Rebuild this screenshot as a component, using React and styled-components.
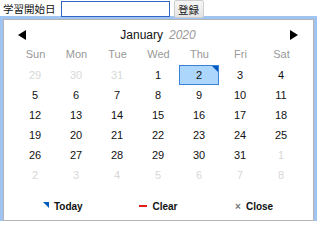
import React from "react";
import styled, { createGlobalStyle } from "styled-components";

const GlobalStyle = createGlobalStyle`
  html, body {
    margin: 0;
    padding: 0;
    background: #fff;
  }
  body {
    font-family: "Liberation Sans", Arial, "Noto Sans CJK JP", sans-serif;
    color: #111;
  }
`;

const Page = styled.div`
  padding: 0 0 0 3px;
  width: 311px;
`;

const TopRow = styled.div`
  display: flex;
  align-items: center;
  height: 18px;
`;

const Label = styled.span`
  font-family: "Noto Sans CJK JP", sans-serif;
  font-size: 10.5px;
  line-height: 16px;
  color: #111;
`;

const TextInput = styled.input`
  box-sizing: border-box;
  width: 109px;
  height: 16px;
  margin: 0 0 0 5px;
  padding: 0 2px;
  border: 1px solid #3464c6;
  outline: none;
  font-size: 11px;
`;

const Button = styled.button`
  box-sizing: border-box;
  height: 18px;
  width: 30px;
  margin-left: 4px;
  padding: 0;
  border: 1px solid #cfcfcf;
  border-radius: 2px;
  background: linear-gradient(#f6f6f6, #e4e4e4);
  font-family: "Noto Sans CJK JP", sans-serif;
  font-size: 10.5px;
  color: #222;
`;

const Picker = styled.div`
  box-sizing: border-box;
  margin-top: 1px;
  width: 311px;
  border: 1px solid #b4b4b4;
  box-shadow: 0 0 0 3px #9fc4f2;
  background: #fff;
  padding: 7px 10px 6px 10px;
`;

const Header = styled.div`
  display: flex;
  align-items: center;
  justify-content: space-between;
  height: 16px;
  padding: 0 5px 0 4px;
`;

const Arrow = styled.span`
  width: 0;
  height: 0;
  border-top: 5px solid transparent;
  border-bottom: 5px solid transparent;
  ${(p) =>
    p.$dir === "left"
      ? "border-right: 8px solid #000;"
      : "border-left: 8px solid #000;"}
`;

const Title = styled.div`
  font-size: 12px;
  color: #111;
  display: flex;
  gap: 6px;
`;

const Year = styled.span`
  font-style: italic;
  color: #999;
`;

const Grid = styled.div`
  display: grid;
  grid-template-columns: repeat(7, 41px);
  padding-left: 1px;
`;

const WeekDay = styled.div`
  margin-top: 3px;
  margin-bottom: 3px;
  height: 16px;
  line-height: 16px;
  text-align: center;
  font-size: 11px;
  color: #999;
`;

const Day = styled.div`
  position: relative;
  box-sizing: border-box;
  height: 20px;
  line-height: 18px;
  text-align: center;
  font-size: 11px;
  border: 1px solid ${(p) => (p.$selected ? "#3b82d6" : "transparent")};
  background: ${(p) => (p.$selected ? "#acd6fc" : "transparent")};
  color: ${(p) => (p.$muted ? "#d8d8d8" : "#111")};
  width: 40px;
`;

const Corner = styled.span`
  position: absolute;
  top: 0;
  right: 0;
  width: 0;
  height: 0;
  border-top: 6px solid #0059bc;
  border-left: 6px solid transparent;
`;

const Footer = styled.div`
  display: grid;
  grid-template-columns: repeat(3, 1fr);
  width: 287px;
  margin: 13px 0 0 1px;
  height: 16px;
`;

const FooterButton = styled.div`
  display: flex;
  align-items: center;
  justify-content: center;
  gap: 5px;
  font-size: 10px;
  font-weight: bold;
  color: #111;
`;

const TodayMark = styled.span`
  width: 0;
  height: 0;
  border-top: 6px solid #0059bc;
  border-left: 6px solid transparent;
  margin-top: -3px;
`;

const ClearMark = styled.span`
  width: 8px;
  height: 2px;
  background: #e0201a;
`;

const CloseMark = styled.span`
  font-size: 10px;
  color: #777;
  font-weight: bold;
`;

const weekdays = ["Sun", "Mon", "Tue", "Wed", "Thu", "Fri", "Sat"];

const days = [
  ...[29, 30, 31].map((d) => ({ d, muted: true })),
  ...Array.from({ length: 31 }, (_, i) => ({ d: i + 1 })),
  ...Array.from({ length: 8 }, (_, i) => ({ d: i + 1, muted: true })),
];

const App = () => {
  return (
    <Page>
      <GlobalStyle />
      <TopRow>
        <Label>学習開始日</Label>
        <TextInput type="text" />
        <Button>登録</Button>
      </TopRow>
      <Picker>
        <Header>
          <Arrow $dir="left" />
          <Title>
            <span>January</span>
            <Year>2020</Year>
          </Title>
          <Arrow $dir="right" />
        </Header>
        <Grid>
          {weekdays.map((w) => (
            <WeekDay key={w}>{w}</WeekDay>
          ))}
          {days.map((item, i) => {
            const selected = !item.muted && item.d === 2;
            return (
              <Day key={i} $muted={item.muted} $selected={selected}>
                {item.d}
                {selected && <Corner />}
              </Day>
            );
          })}
        </Grid>
        <Footer>
          <FooterButton>
            <TodayMark />
            Today
          </FooterButton>
          <FooterButton>
            <ClearMark />
            Clear
          </FooterButton>
          <FooterButton>
            <CloseMark>×</CloseMark>
            Close
          </FooterButton>
        </Footer>
      </Picker>
    </Page>
  );
};

export default App;
